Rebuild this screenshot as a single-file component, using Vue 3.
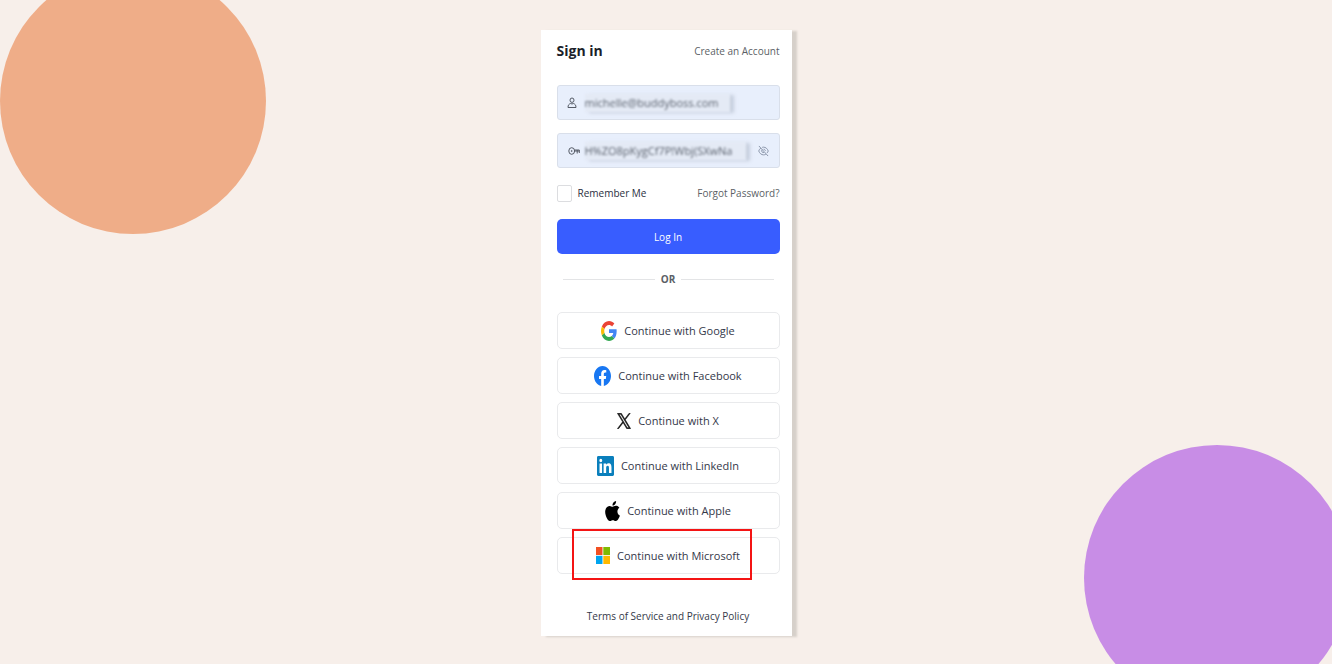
<script setup>
import { ref } from 'vue'

const email = ref('michelle@buddyboss.com')
const password = ref('H%ZO8pKygCf7P!Wbj(SXwNa')
const remember = ref(false)

const providers = ['Google', 'Facebook', 'X', 'LinkedIn', 'Apple', 'Microsoft']
</script>

<template>
  <main class="page">
    <div class="circle circle-orange"></div>
    <div class="circle circle-purple"></div>

    <form class="card" @submit.prevent>
      <header class="head">
        <h1>Sign in</h1>
        <a href="#">Create an Account</a>
      </header>

      <div class="field">
        <svg class="user" viewBox="0 0 10 12" aria-hidden="true">
          <ellipse cx="5" cy="3.200" rx="2" ry="2.200" />
          <path d="M3.600 6.500C2 7 1 8 1 10.500h8c0-2.500-1-3.500-2.600-4a2.500 2.500 0 0 1-2.800 0z" />
        </svg>
        <input v-model="email" class="smudge smudge-email" type="text" aria-label="Email address" spellcheck="false" />
      </div>

      <div class="field">
        <svg class="key" viewBox="0 0 12 10" aria-hidden="true">
          <ellipse cx="3.700" cy="5" rx="2.900" ry="3.300" />
          <circle cx="3.700" cy="5" r=".5" />
          <path d="M6.500 4H11.300V7M9.200 4V7.500M6.500 5H11" />
        </svg>
        <input v-model="password" class="smudge" type="text" aria-label="Password" spellcheck="false" />
        <button class="eye" type="button" aria-label="Hide password">
          <svg viewBox="0 0 12 12" aria-hidden="true">
            <path d="M1 .5l10 11M3.200 2.700C1.900 3.600 1.200 4.800.8 6c1 2.600 2.900 4.200 5.200 4.200 1 0 1.800-.2 2.500-.6M4.600 2C5 1.800 5.500 1.800 6 1.800c2.300 0 4.200 1.600 5.200 4.200-.3.800-.8 1.600-1.400 2.200M4.500 4.500c-1.300 1.600.1 3.700 2 3.200M6 4c1.200 0 2 .9 2 2" />
          </svg>
        </button>
      </div>

      <div class="options">
        <label><input v-model="remember" type="checkbox" />Remember Me</label>
        <a href="#">Forgot Password?</a>
      </div>

      <button class="login" type="submit">Log In</button>

      <div class="divider"><span>OR</span></div>

      <div class="providers">
        <button v-for="name in providers" :key="name" type="button" :class="['provider', name.toLowerCase()]">
          <svg v-if="name === 'Google'" width="16" height="20" viewBox="0 0 48 48" preserveAspectRatio="none" aria-hidden="true">
            <path fill="#ea4335" d="M24 9.500c3.540 0 6.710 1.220 9.210 3.600l6.850-6.850C35.900 2.380 30.470 0 24 0 14.620 0 6.510 5.380 2.560 13.220l7.980 6.190C12.430 13.720 17.740 9.500 24 9.500z" />
            <path fill="#4285f4" d="M46.980 24.550c0-1.570-.15-3.090-.38-4.550H24v9.020h12.940c-.58 2.960-2.260 5.480-4.780 7.180l7.730 6c4.510-4.180 7.090-10.360 7.090-17.650z" />
            <path fill="#fbbc05" d="M10.530 28.590c-.48-1.450-.76-2.990-.76-4.590s.27-3.140.76-4.590l-7.980-6.190C.92 16.460 0 20.120 0 24s.92 7.540 2.560 10.780l7.970-6.190z" />
            <path fill="#34a853" d="M24 48c6.480 0 11.930-2.130 15.890-5.810l-7.730-6c-2.150 1.450-4.920 2.300-8.160 2.300-6.260 0-11.570-4.220-13.470-9.910l-7.980 6.190C6.510 42.620 14.620 48 24 48z" />
          </svg>
          <svg v-else-if="name === 'Facebook'" width="17" height="20" viewBox="0 0 24 24" preserveAspectRatio="none" aria-hidden="true">
            <path fill="#1877f2" d="M24 12.070C24 5.400 18.630 0 12 0S0 5.400 0 12.070C0 18.100 4.390 23.100 10.130 24v-8.440H7.080v-3.490h3.050V9.410c0-3.020 1.790-4.690 4.530-4.690 1.310 0 2.680.23 2.680.23v2.970h-1.510c-1.490 0-1.960.93-1.960 1.880v2.270h3.330l-.53 3.490h-2.800V24C19.610 23.100 24 18.100 24 12.070z" />
          </svg>
          <svg v-else-if="name === 'X'" width="14" height="16" viewBox="0 0 24 24" preserveAspectRatio="none" aria-hidden="true">
            <path fill="#111" stroke="#111" stroke-width=".9" d="M14.200 10.200 22.700.5h-2L13.300 8.900 7.400.5H.7l8.900 12.800L.7 23.500h2l7.800-8.900 6.200 8.900h6.700L14.200 10.200zM3.600 2h3l13.900 20h-3L3.600 2z" />
          </svg>
          <svg v-else-if="name === 'LinkedIn'" width="17" height="20" viewBox="0 0 24 24" preserveAspectRatio="none" aria-hidden="true">
            <path fill="#0a7fbc" d="M22.230 0H1.770C.79 0 0 .77 0 1.730v20.540C0 23.230.79 24 1.770 24h20.450c.98 0 1.780-.77 1.780-1.730V1.730C24 .77 23.200 0 22.220 0zM7.120 20.450H3.560V9h3.560v11.450zM5.340 7.430a2.060 2.060 0 1 1 0-4.130 2.060 2.060 0 0 1 0 4.130zm15.110 13.020h-3.550v-5.570c0-1.330-.03-3.040-1.850-3.040-1.860 0-2.140 1.450-2.140 2.940v5.670H9.350V9h3.410v1.560h.05c.48-.9 1.640-1.850 3.370-1.850 3.600 0 4.270 2.370 4.270 5.460v6.280z" />
          </svg>
          <svg v-else-if="name === 'Apple'" width="15" height="20" viewBox="2 0 20 24" preserveAspectRatio="none" aria-hidden="true">
            <path fill="#000" d="M12.150 6.900c-.95 0-2.420-1.080-3.960-1.040-2.040.03-3.910 1.180-4.960 3.010-2.120 3.680-.55 9.100 1.520 12.090 1.010 1.450 2.210 3.090 3.790 3.040 1.520-.07 2.090-.99 3.930-.99 1.830 0 2.350.99 3.960.95 1.640-.03 2.680-1.480 3.680-2.950 1.160-1.690 1.640-3.320 1.660-3.420-.04-.01-3.180-1.220-3.220-4.850-.03-3.040 2.480-4.500 2.600-4.560-1.430-2.090-3.620-2.330-4.390-2.380-2-.16-3.670 1.090-4.610 1.100zM15.530 3.830c.84-1.010 1.400-2.430 1.240-3.830-1.200.05-2.660.8-3.530 1.820-.78.9-1.450 2.340-1.270 3.710 1.340.1 2.720-.69 3.560-1.700z" />
          </svg>
          <svg v-else width="14" height="17" viewBox="0 0 14 17" aria-hidden="true">
            <path fill="#f25022" d="M0 0h6.500v8H0z" />
            <path fill="#7fba00" d="M7.300 0H14v8H7.300z" />
            <path fill="#00a4ef" d="M0 8.800h6.500V17H0z" />
            <path fill="#ffb900" d="M7.300 8.800H14V17H7.300z" />
          </svg>
          <span>Continue with {{ name }}</span>
        </button>
      </div>

      <footer>
        <a href="#">Terms of Service</a> and <a href="#">Privacy Policy</a>
      </footer>
    </form>
  </main>
</template>

<style>
body {
  margin: 0;
  background: #f7efea;
}
</style>

<style scoped>
.page {
  position: relative;
  box-sizing: border-box;
  min-height: 100vh;
  padding: 30px 16px 28px;
  overflow: hidden;
  background: #f7efea;
  font-family: "Open Sans", "Noto Sans", sans-serif;
  font-size: 10px;
  color: #1e2132;
}

.circle {
  position: absolute;
  width: 266px;
  height: 266px;
  border-radius: 50%;
}

.circle-orange {
  top: -32px;
  left: 0;
  background: #efad88;
}

.circle-purple {
  right: -18px;
  bottom: -47px;
  background: #c88de6;
}

.card {
  position: relative;
  box-sizing: border-box;
  max-width: 251px;
  margin: 0 auto;
  padding: 10px 12px 10px 16px;
  background: #fff;
  box-shadow: 5px 1px 2px #d6d0ca;
}

a {
  color: inherit;
  text-decoration: none;
}

button {
  font-family: inherit;
  cursor: pointer;
}

.head,
.options,
.options label,
.field,
.divider {
  display: flex;
  align-items: center;
}

.head,
.options {
  justify-content: space-between;
}

.head {
  height: 21px;
  margin-bottom: 24px;
  color: #5c5f66;
}

h1 {
  margin: 0;
  font-size: 14px;
  font-weight: 700;
  color: #1b1f2b;
}

.field {
  box-sizing: border-box;
  height: 35px;
  margin-bottom: 13px;
  padding: 0 10px 0 9px;
  border: 1px solid #d9dfea;
  border-radius: 3px;
  background: #e8effc;
}

.field svg {
  flex: none;
  fill: none;
  stroke: #555b66;
  stroke-width: 1;
}

.user {
  width: 10px;
  height: 12px;
  margin-right: 8px;
}

.key {
  width: 12px;
  height: 10px;
  margin: 0 5px 0 1px;
}

.smudge {
  box-sizing: border-box;
  flex: 1;
  min-width: 0;
  height: 18px;
  padding: 0;
  border: 0;
  outline: 0;
  background: #e4eaf5;
  box-shadow: 4px 1px 3px #c6cedd;
  filter: blur(1px);
  font-family: inherit;
  font-size: 11px;
  color: #5d6470;
}

.smudge-email {
  flex: none;
  width: 145px;
}

.eye {
  display: flex;
  margin-left: 12px;
  padding: 0;
  border: 0;
  background: none;
}

.eye svg {
  width: 11px;
  height: 12px;
  stroke: #8590a5;
}

.options {
  height: 24px;
  color: #5c5f66;
}

.options label {
  gap: 6px;
  color: #2b2f3e;
}

.options input {
  appearance: none;
  box-sizing: border-box;
  width: 15px;
  height: 17px;
  margin: 0;
  border: 1px solid #dcdde0;
  border-radius: 2px;
  background: #fff;
}

.options input:checked {
  background: #385dff;
}

.login {
  display: block;
  width: 100%;
  height: 35px;
  margin-top: 14px;
  padding: 0;
  border: 0;
  border-radius: 5px;
  background: #385dff;
  font-size: 10px;
  font-weight: 500;
  color: #fff;
}

.divider {
  gap: 6px;
  height: 20px;
  margin: 15px 6px 23px;
  font-weight: 700;
  color: #5c5f66;
}

.divider::before,
.divider::after {
  content: "";
  flex: 1;
  height: 1px;
  background: #e3e4e6;
}

.providers {
  display: grid;
  gap: 8px;
}

.provider {
  position: relative;
  display: flex;
  align-items: center;
  justify-content: center;
  gap: 7px;
  height: 37px;
  padding: 0;
  border: 1px solid #e9eaec;
  border-radius: 5px;
  background: #fff;
  font-size: 11px;
  color: #343849;
}

.microsoft::after {
  content: "";
  position: absolute;
  inset: -9px 27px -7px 14px;
  border: 2px solid #f41414;
}

footer {
  margin-top: 32px;
  line-height: 20px;
  text-align: center;
  color: #343849;
}
</style>
